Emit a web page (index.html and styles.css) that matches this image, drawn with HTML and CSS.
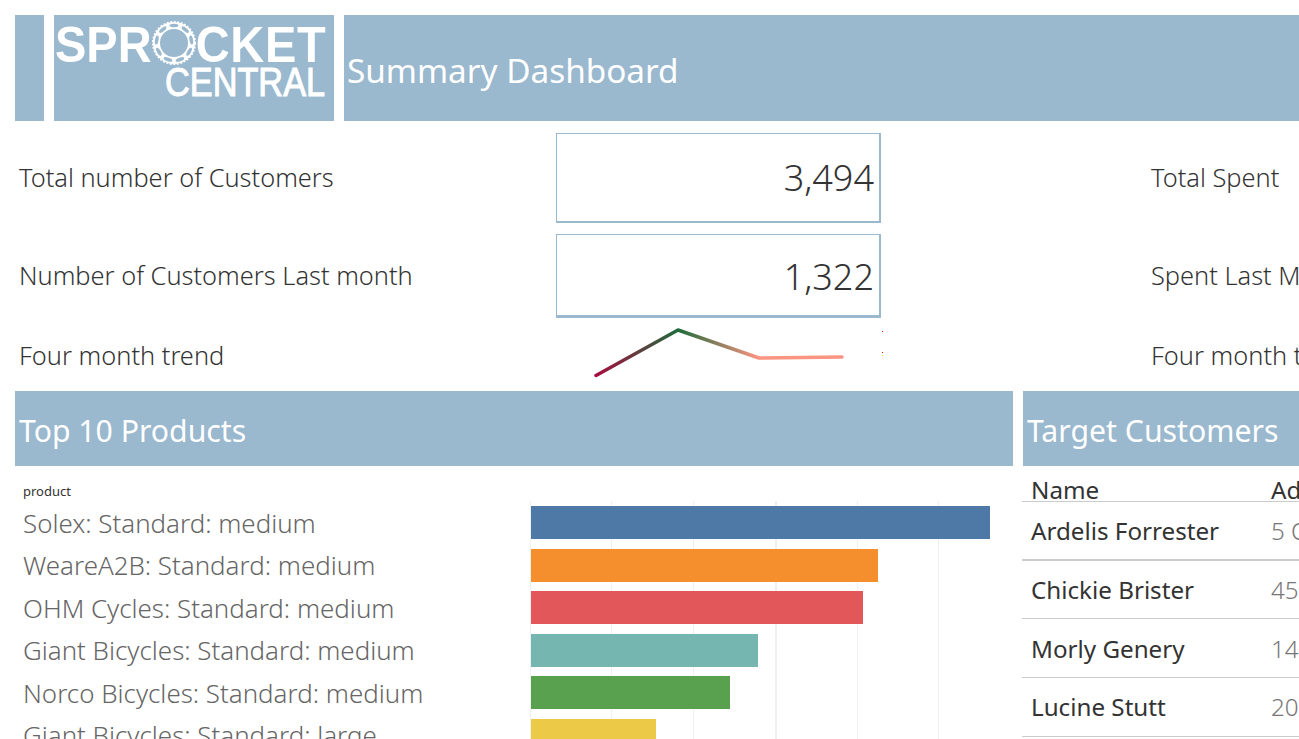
FILE: index.html
```html
<!DOCTYPE html>
<html lang="en">
<head>
    <meta charset="UTF-8">
    <title>Summary Dashboard</title>
    <link rel="stylesheet" href="styles.css">
</head>
<body>

    <div class="header">
        <div class="stub"></div>
        <div class="logo">
            <div class="logo-top">
                <span class="logo-word">SPR</span>
                <svg class="sprocket" width="44" height="44" viewBox="0 0 44 44">
                    <circle cx="22" cy="22" r="17.5" fill="none" stroke="#fff" stroke-width="7"/>
                    <circle cx="22" cy="22" r="21" fill="none" stroke="#fff" stroke-width="2" stroke-dasharray="2 1.5"/>
                    <g fill="#9ab8ce">
                        <ellipse cx="22" cy="4.5" rx="4.5" ry="1.8"/>
                        <ellipse cx="22" cy="4.5" rx="4.5" ry="1.8" transform="rotate(40 22 22)"/>
                        <ellipse cx="22" cy="4.5" rx="4.5" ry="1.8" transform="rotate(80 22 22)"/>
                        <ellipse cx="22" cy="4.5" rx="4.5" ry="1.8" transform="rotate(120 22 22)"/>
                        <ellipse cx="22" cy="4.5" rx="4.5" ry="1.8" transform="rotate(160 22 22)"/>
                        <ellipse cx="22" cy="4.5" rx="4.5" ry="1.8" transform="rotate(200 22 22)"/>
                        <ellipse cx="22" cy="4.5" rx="4.5" ry="1.8" transform="rotate(240 22 22)"/>
                        <ellipse cx="22" cy="4.5" rx="4.5" ry="1.8" transform="rotate(280 22 22)"/>
                        <ellipse cx="22" cy="4.5" rx="4.5" ry="1.8" transform="rotate(320 22 22)"/>
                    </g>
                </svg>
                <span class="logo-word wide">CKET</span>
            </div>
            <div class="logo-bottom">CENTRAL</div>
        </div>
        <div class="title">Summary Dashboard</div>
    </div>

    <div class="kpi-row first">
        <div class="kpi-label">Total number of Customers</div>
        <div class="kpi-box">3,494</div>
        <div class="kpi-label right">Total Spent</div>
    </div>
    <div class="kpi-row second">
        <div class="kpi-label">Number of Customers Last month</div>
        <div class="kpi-box thick">1,322</div>
        <div class="kpi-label right">Spent Last Month</div>
    </div>
    <div class="kpi-row trend">
        <div class="kpi-label">Four month trend</div>
        <svg class="spark" width="325" height="73" viewBox="0 0 325 73">
            <defs>
                <linearGradient id="sparkline" gradientUnits="userSpaceOnUse" x1="39" y1="0" x2="286" y2="0">
                    <stop offset="0" stop-color="#a80d3f"/>
                    <stop offset="0.336" stop-color="#1f6b3c"/>
                    <stop offset="0.66" stop-color="#fb9480"/>
                    <stop offset="1" stop-color="#fc9482"/>
                </linearGradient>
            </defs>
            <polyline points="40,57.5 122,12 203,40 286,39" fill="none" stroke="url(#sparkline)" stroke-width="3.5" stroke-linecap="round" stroke-linejoin="round"/>
            <rect x="326" y="13" width="1" height="1" fill="#f00"/>
            <rect x="326" y="34" width="1" height="1" fill="#f00"/>
            <rect x="326" y="37" width="1" height="1" fill="#ff0"/>
        </svg>
        <div class="kpi-label right">Four month trend</div>
    </div>

    <div class="bottom">
        <div class="products">
            <div class="band">Top 10 Products</div>
            <div class="axis-title">product</div>
            <div class="chart">
                <div class="grid-lines">
                    <i></i><i></i><i></i><i></i><i></i><i></i>
                </div>
                <div class="bar-row"><span class="bar-name">Solex: Standard: medium</span><div class="bar blue" style="width:459px"></div></div>
                <div class="bar-row"><span class="bar-name">WeareA2B: Standard: medium</span><div class="bar orange" style="width:347px"></div></div>
                <div class="bar-row"><span class="bar-name">OHM Cycles: Standard: medium</span><div class="bar red" style="width:332px"></div></div>
                <div class="bar-row"><span class="bar-name">Giant Bicycles: Standard: medium</span><div class="bar teal" style="width:227px"></div></div>
                <div class="bar-row"><span class="bar-name">Norco Bicycles: Standard: medium</span><div class="bar green" style="width:199px"></div></div>
                <div class="bar-row"><span class="bar-name">Giant Bicycles: Standard: large</span><div class="bar yellow" style="width:125px"></div></div>
            </div>
        </div>
        <div class="customers">
            <div class="band">Target Customers</div>
            <div class="table-head"><span class="col-name">Name</span><span class="col-addr">Address</span></div>
            <div class="table-row thick"><span class="col-name">Ardelis Forrester</span><span class="col-addr">5 Oak Street</span></div>
            <div class="table-row"><span class="col-name">Chickie Brister</span><span class="col-addr">45 Ruskin Way</span></div>
            <div class="table-row"><span class="col-name">Morly Genery</span><span class="col-addr">14 Mayer Road</span></div>
            <div class="table-row"><span class="col-name">Lucine Stutt</span><span class="col-addr">20 Grim Lane</span></div>
        </div>
    </div>

</body>
</html>
```

FILE: styles.css
```css
html, body {
    margin: 0;
    height: 739px;
    overflow: hidden;
}
body {
    width: 1299px;
    padding: 15px 0 0 15px;
    box-sizing: border-box;
    background-color: #ffffff;
    font-family: "Noto Sans", sans-serif;
    color: #333333;
}

/* header */
.header {
    display: flex;
    gap: 10px;
    height: 106px;
    width: 1284px;
}
.stub {
    width: 29px;
    background: #9ab8ce;
}
.logo {
    width: 280px;
    background: #9ab8ce;
    color: #ffffff;
    font-family: "Liberation Sans", Arial, sans-serif;
    font-weight: bold;
}
.logo-top {
    display: flex;
    align-items: center;
    height: 44px;
    margin-top: 6px;
    padding-left: 1px;
    font-size: 47px;
    line-height: 44px;
}
.logo-word {
    transform: scaleY(1.06) translateY(2px);
}
.logo-word.wide {
    letter-spacing: 0.7px;
}
.sprocket {
    flex: none;
}
.logo-bottom {
    margin: -1px 0 0 111px;
    font-size: 34.3px;
    font-weight: normal;
    -webkit-text-stroke: 0.9px #ffffff;
    line-height: 30px;
    transform: scaleY(1.2);
    transform-origin: top left;
}
.title {
    flex: 1;
    background: #9ab8ce;
    color: #ffffff;
    font-size: 33.3px;
    line-height: 111px;
    padding-left: 3px;
}

/* kpi rows */
.kpi-row {
    display: flex;
    align-items: center;
    width: 1284px;
}
.kpi-row.first {
    height: 90px;
    margin-top: 12px;
}
.kpi-row.second {
    height: 84px;
    margin-top: 11px;
}
.kpi-row.trend {
    height: 73px;
}
.kpi-label {
    width: 537px;
    flex: none;
    padding: 0 0 2px 4px;
    font-size: 25.4px;
    font-weight: 300;
    white-space: nowrap;
}
.first .kpi-label {
    padding-bottom: 3px;
}
.trend .kpi-label {
    padding: 0 0 0 4px;
}
.kpi-label.right {
    width: auto;
    margin-left: 266px;
}
.kpi-box {
    width: 325px;
    height: 100%;
    flex: none;
    box-sizing: border-box;
    border: 1px solid #9ab8ce;
    border-right-width: 2px;
    border-bottom-width: 2px;
    padding-right: 5px;
    text-align: right;
    font-size: 36px;
    font-weight: 300;
    line-height: 88px;
}
.kpi-box.thick {
    border-bottom-width: 3px;
    line-height: 84px;
}
.spark {
    flex: none;
    overflow: visible;
}

/* bottom panels */
.bottom {
    display: flex;
    gap: 10px;
    width: 1284px;
}
.products {
    width: 998px;
    flex: none;
}
.customers {
    flex: 1;
    min-width: 0;
}
.band {
    height: 75px;
    background: #9ab8ce;
    color: #ffffff;
    font-size: 30.2px;
    line-height: 79px;
    padding-left: 4px;
}
.axis-title {
    height: 35px;
    padding-left: 8px;
    font-size: 13px;
    line-height: 50px;
}
.chart {
    position: relative;
    padding-top: 5px;
}
.grid-lines i {
    position: absolute;
    top: 0;
    width: 1px;
    height: 300px;
    background: #f0f0f0;
}
.grid-lines i:nth-child(1) { left: 515px; }
.grid-lines i:nth-child(2) { left: 596px; }
.grid-lines i:nth-child(3) { left: 678px; }
.grid-lines i:nth-child(4) { left: 760px; width: 2px; }
.grid-lines i:nth-child(5) { left: 842px; }
.grid-lines i:nth-child(6) { left: 923px; }
.bar-row {
    position: relative;
    display: flex;
    align-items: center;
    height: 33px;
    margin-bottom: 9.5px;
}
.bar-name {
    width: 508px;
    flex: none;
    padding-left: 8px;
    font-size: 25.9px;
    font-weight: 300;
    color: #666666;
    white-space: nowrap;
}
.bar {
    height: 100%;
}
.blue { background: #4e79a7; }
.orange { background: #f58e2c; }
.red { background: #e1575a; }
.teal { background: #76b6b1; }
.green { background: #59a14f; }
.yellow { background: #edc948; }

/* table */
.table-head,
.table-row {
    display: flex;
    align-items: center;
    margin-left: -1px;
    padding-left: 9px;
    white-space: nowrap;
    overflow: hidden;
    border-bottom: 1px solid #cccccc;
    font-size: 24.2px;
}
.table-head {
    padding-top: 12px;
    box-sizing: border-box;
    height: 36px;
}
.table-row {
    height: 57.7px;
}
.table-row.thick {
    height: 56.7px;
    border-bottom-width: 2px;
}
.col-name {
    width: 240px;
    flex: none;
}
.table-row .col-addr {
    color: #777777;
    font-weight: 300;
}
```
